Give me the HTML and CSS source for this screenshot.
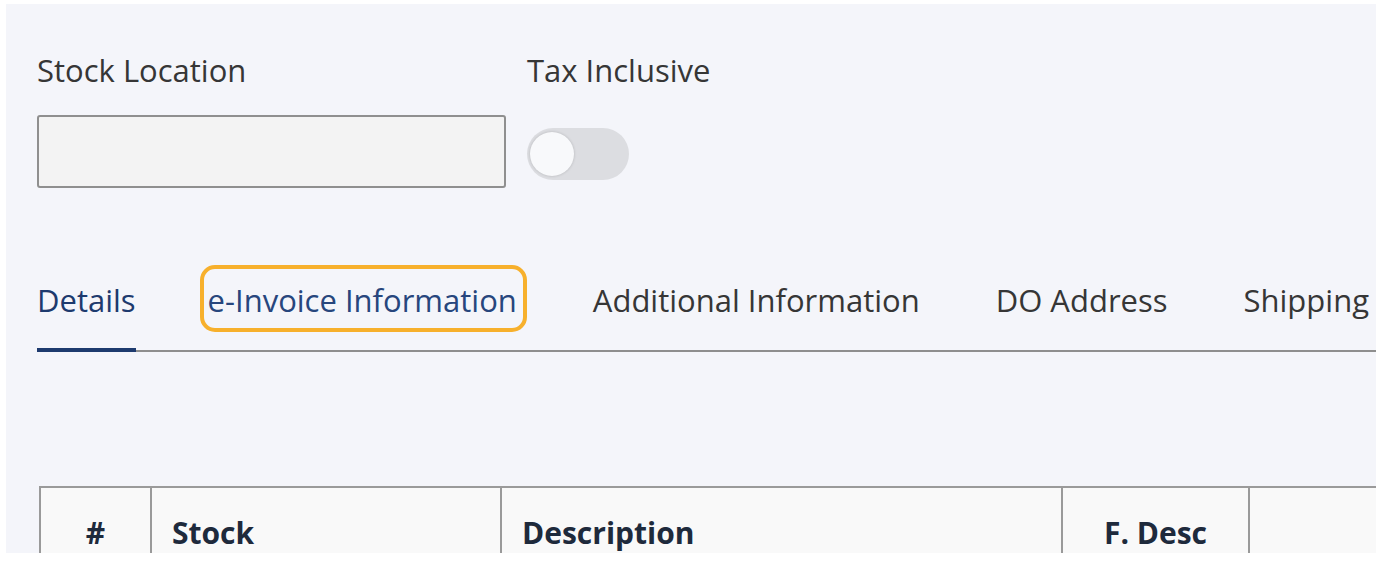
FILE: index.html
```html
<!DOCTYPE html>
<html>
<head>
<meta charset="utf-8">
<link rel="stylesheet" href="styles.css">
</head>
<body>
<div class="panel">
  <div class="fields">
    <div class="field field-stock">
      <div class="label">Stock Location</div>
      <div class="input"></div>
    </div>
    <div class="field field-tax">
      <div class="label">Tax Inclusive</div>
      <div class="toggle"><span class="knob"></span></div>
    </div>
  </div>
  <div class="tabs">
    <div class="tab active">Details</div>
    <div class="tab focus">e-Invoice Information</div>
    <div class="tab">Additional Information</div>
    <div class="tab">DO Address</div>
    <div class="tab">Shipping</div>
  </div>
  <table class="grid">
    <thead>
      <tr>
        <th class="c-num">#</th>
        <th class="c-stock">Stock</th>
        <th class="c-desc">Description</th>
        <th class="c-fdesc">F. Desc</th>
        <th class="c-more"></th>
      </tr>
    </thead>
  </table>
</div>
</body>
</html>
```
FILE: styles.css
```css
html, body {
  margin: 0;
  padding: 0;
  background: #ffffff;
}
body {
  font-family: "Open Sans", "Noto Sans", sans-serif;
  color: #333;
}
.panel {
  margin: 4px 0 0 6px;
  width: 1370px;
  height: 549px;
  background: #f4f5fa;
  padding-left: 31px;
  box-sizing: border-box;
  overflow: hidden;
}
.fields {
  display: flex;
  gap: 21px;
  padding-top: 46px;
}
.label {
  font-size: 31px;
  line-height: 40px;
  color: #363636;
  white-space: nowrap;
}
.field-stock {
  width: 469px;
}
.input {
  margin-top: 25px;
  height: 73px;
  box-sizing: border-box;
  border: 2px solid #8f8f8f;
  border-radius: 3px;
  background: #f3f3f3;
}
.toggle {
  margin-top: 38px;
  width: 102px;
  height: 52px;
  border-radius: 26px;
  background: #dcdde1;
  position: relative;
}
.knob {
  position: absolute;
  left: 3px;
  top: 4px;
  width: 44px;
  height: 44px;
  border-radius: 50%;
  background: #f8f9fb;
  box-shadow: 0 0 3px rgba(0,0,0,0.18);
}
.tabs {
  margin-top: 81px;
  display: flex;
  gap: 76px;
  border-bottom: 2px solid #8e8e8e;
  white-space: nowrap;
  width: 1400px;
}
.tab {
  font-size: 31px;
  line-height: 40px;
  padding: 11px 0 30px;
  color: #363636;
  position: relative;
}
.tab.active {
  color: #1d3a6e;
  margin-right: -4px;
}
.tab.active::after {
  content: "";
  position: absolute;
  left: 0;
  right: 0;
  bottom: -2px;
  height: 4px;
  background: #1d3a6e;
}
.tab.focus {
  color: #27467d;
}
.tab.focus::before {
  content: "";
  position: absolute;
  left: -8px;
  right: -10px;
  top: -4px;
  height: 67px;
  border: 4px solid #f7b02c;
  border-radius: 15px;
  box-sizing: border-box;
}
.grid {
  margin-top: 134px;
  margin-left: 2px;
  border-collapse: collapse;
  table-layout: fixed;
  width: 1500px;
  background: #f9f9f9;
}
.grid th {
  border: 2px solid #9a9a9a;
  height: 90px;
  padding: 0 20px;
  box-sizing: border-box;
  font-size: 30px;
  font-weight: 700;
  color: #1e2a3c;
  text-align: left;
}
.c-num { width: 111px; text-align: center !important; }
.c-stock { width: 350px; }
.c-desc { width: 561px; }
.c-fdesc { width: 187px; text-align: center !important; }
.c-more { width: 291px; }
```
